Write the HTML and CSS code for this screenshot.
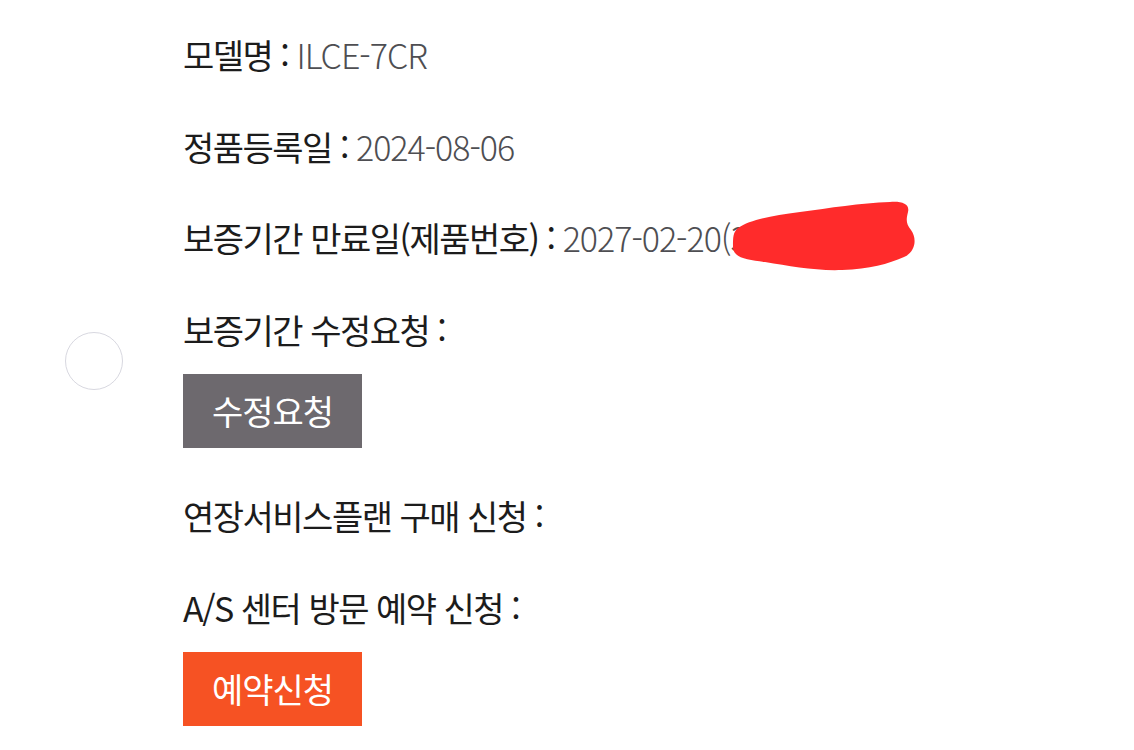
FILE: index.html
```html
<!DOCTYPE html>
<html lang="ko">
<head>
    <meta charset="UTF-8">
    <meta name="viewport" content="width=device-width, initial-scale=1.0">
    <title>정품등록 정보</title>
    <link rel="stylesheet" href="styles.css">
</head>
<body>

    <div class="container">
        <!-- Product Info -->
        <div class="info-row">
            <p class="line"><span class="label">모델명 :</span> <span class="value">ILCE-7CR</span></p>
        </div>
        <div class="info-row">
            <p class="line"><span class="label">정품등록일 :</span> <span class="value">2024-08-06</span></p>
        </div>
        <div class="info-row">
            <p class="line"><span class="label">보증기간 만료일(제품번호) :</span> <span class="value">2027-02-20(3</span></p>
        </div>

        <!-- Warranty Edit -->
        <div class="info-row">
            <p class="line"><span class="label">보증기간 수정요청 :</span></p>
            <button class="btn btn-gray">수정요청</button>
        </div>

        <div class="info-row">
            <p class="line"><span class="label">연장서비스플랜 구매 신청 :</span></p>
        </div>

        <!-- A/S Reservation -->
        <div class="info-row">
            <p class="line"><span class="label">A/S 센터 방문 예약 신청 :</span></p>
            <button class="btn btn-orange">예약신청</button>
        </div>
    </div>

    <!-- floating circle button -->
    <div class="float-circle"></div>

    <!-- hidden serial number -->
    <svg class="scribble" width="200" height="80" viewBox="0 0 200 80">
        <path d="M8 28 C20 20 40 16 70 12 C100 8 130 3 160 2 C172 1 180 4 178 12 C176 20 176 24 181 30 C187 38 186 52 174 57 C158 64 140 69 112 70 C85 71 60 66 35 62 C18 60 2 58 3 46 C3 38 3 32 8 28 Z" fill="#ff2b2b"/>
    </svg>

</body>
</html>
```

FILE: styles.css
```css
body {
    margin: 0;
    padding: 0;
    background-color: #fff;
    font-family: "Noto Sans CJK KR", "Noto Sans", sans-serif;
    color: #222;
}

.container {
    padding: 32px 0 0 183px;
    display: flex;
    flex-direction: column;
    gap: 45.5px;
}

.info-row {
    display: flex;
    flex-direction: column;
    align-items: flex-start;
}

.line {
    margin: 0;
    font-size: 34px;
    line-height: 46px;
    letter-spacing: -1.5px;
    white-space: nowrap;
}

.label {
    color: #1c1c1c;
}

.value {
    color: #4e4e52;
    font-weight: 300;
    letter-spacing: -1px;
}

.btn {
    margin-top: 21px;
    width: 179px;
    height: 74px;
    border: none;
    padding: 0;
    color: #fff;
    font-family: "Noto Sans CJK KR", sans-serif;
    font-size: 34px;
    font-weight: 400;
    letter-spacing: -1px;
    cursor: pointer;
}

.btn-gray {
    background-color: #6d696e;
}

.btn-orange {
    background-color: #f65223;
}

.float-circle {
    position: absolute;
    left: 65px;
    top: 332px;
    width: 56px;
    height: 56px;
    border-radius: 50%;
    border: 1.5px solid #d8d8e0;
    background: #fff;
}

.scribble {
    position: absolute;
    left: 730px;
    top: 200px;
}
```
